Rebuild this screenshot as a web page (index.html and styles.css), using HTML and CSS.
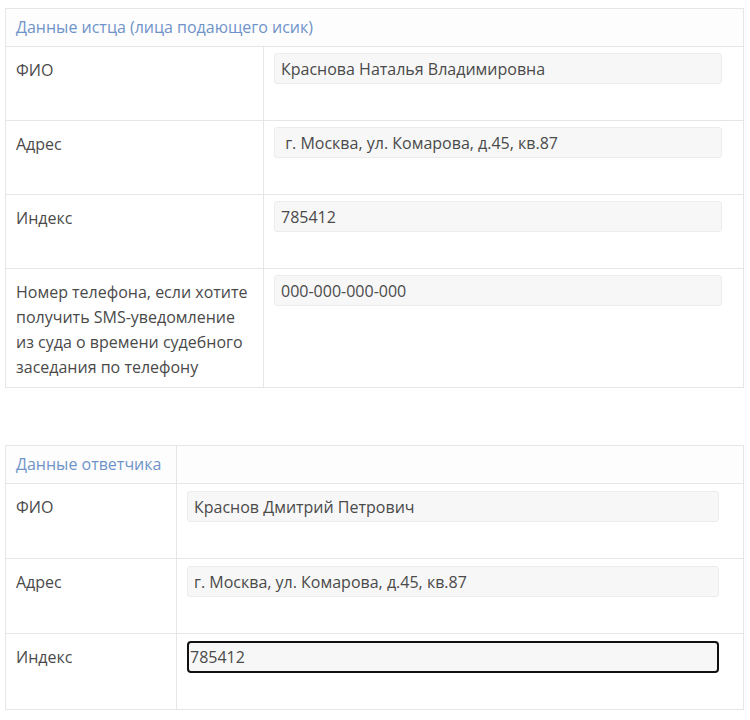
FILE: index.html
```html
<!DOCTYPE html>
<html>
<head>
<meta charset="utf-8">
<title>Данные сторон</title>
<link rel="stylesheet" href="styles.css">
</head>
<body>

  <table class="form-table plaintiff">
    <colgroup>
      <col class="label-col">
      <col>
    </colgroup>
    <tr>
      <th colspan="2">Данные истца (лица подающего исик)</th>
    </tr>
    <tr>
      <td class="label">ФИО</td>
      <td class="field"><input type="text" value="Краснова Наталья Владимировна"></td>
    </tr>
    <tr>
      <td class="label">Адрес</td>
      <td class="field"><input type="text" value=" г. Москва, ул. Комарова, д.45, кв.87"></td>
    </tr>
    <tr>
      <td class="label">Индекс</td>
      <td class="field"><input type="text" value="785412"></td>
    </tr>
    <tr>
      <td class="label">Номер телефона, если хотите получить SMS-уведомление из суда о времени судебного заседания по телефону</td>
      <td class="field"><input type="text" value="000-000-000-000"></td>
    </tr>
  </table>

  <table class="form-table defendant">
    <colgroup>
      <col class="label-col">
      <col>
    </colgroup>
    <tr>
      <th>Данные ответчика</th>
      <th></th>
    </tr>
    <tr>
      <td class="label">ФИО</td>
      <td class="field"><input type="text" value="Краснов Дмитрий Петрович"></td>
    </tr>
    <tr>
      <td class="label">Адрес</td>
      <td class="field"><input type="text" value="г. Москва, ул. Комарова, д.45, кв.87"></td>
    </tr>
    <tr>
      <td class="label">Индекс</td>
      <td class="field"><input type="text" value="785412" class="focused"></td>
    </tr>
  </table>

</body>
</html>
```

FILE: styles.css
```css
body{
    margin: 8px 6px 0 5px;
    background-color: #ffffff;
    font-family: "Open Sans", "Liberation Sans", sans-serif;
    font-size: 16px;
    color: #4a4a4a;
}

.form-table{
    width: 739px;
    border-collapse: collapse;
    table-layout: fixed;
}
.form-table th,
.form-table td{
    border: 1px solid #e6e6e6;
    vertical-align: top;
    text-align: left;
}
.form-table th{
    padding: 7px 10px 8px 10px;
    line-height: 22px;
    font-weight: normal;
    color: #6f93c9;
    background-color: #fdfdfd;
}

.plaintiff .label-col{ width: 258px; }
.defendant{ margin-top: 57px; }
.defendant .label-col{ width: 171px; }

.label{
    padding: 11px 10px 7px 10px;
    line-height: 25px;
}
.field{
    padding: 6px 21px 36px 10px;
}
.defendant .field{ padding: 7px 24px 36px 10px; }

input{
    display: block;
    box-sizing: border-box;
    width: 100%;
    height: 31px;
    padding: 0 6px;
    border: 1px solid #ececec;
    border-radius: 3px;
    background-color: #f7f7f7;
    font-family: "Open Sans", "Liberation Sans", sans-serif;
    font-size: 16px;
    color: #4a4a4a;
}
input.focused{
    height: 32px;
    border: 2px solid #111111;
    border-radius: 4px;
    padding: 0 1px;
}
```
